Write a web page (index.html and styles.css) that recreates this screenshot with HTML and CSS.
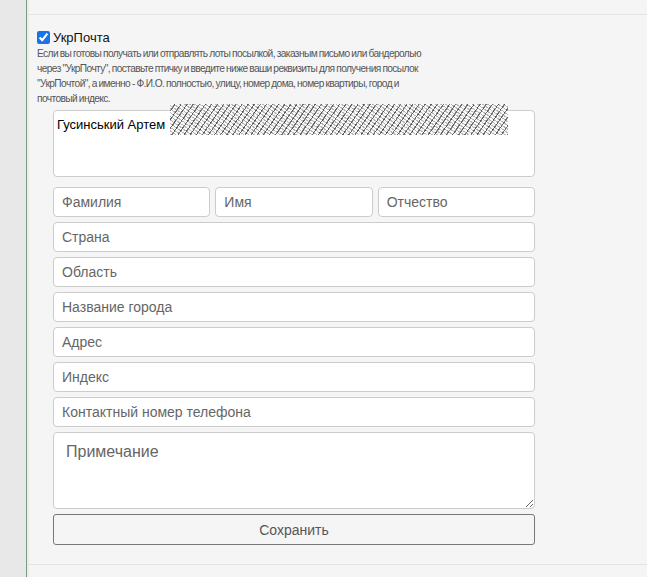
FILE: index.html
```html
<!DOCTYPE html>
<html lang="ru">
<head>
    <meta charset="UTF-8">
    <meta name="viewport" content="width=device-width, initial-scale=1.0">
    <title>УкрПочта</title>
    <link rel="stylesheet" href="styles.css">
</head>
<body>
    <div class="sidebar"></div>
    <div class="page">
        <div class="top-bar"></div>
        <div class="section">
            <label class="check-label">
                <input type="checkbox" checked>
                <span>УкрПочта</span>
            </label>
            <p class="hint">Если вы готовы получать или отправлять лоты посылкой, заказным письмо или бандеролью<br>через "УкрПочту", поставьте птичку и введите ниже ваши реквизиты для получения посылок<br>"УкрПочтой", а именно - Ф.И.О. полностью, улицу, номер дома, номер квартиры, город и<br>почтовый индекс.</p>

            <form class="post-form">
                <div class="address-box">
                    <span class="address-name">Гусинський Артем</span>
                    <span class="redacted"></span>
                </div>
                <div class="name-row">
                    <input class="field" type="text" placeholder="Фамилия">
                    <input class="field" type="text" placeholder="Имя">
                    <input class="field" type="text" placeholder="Отчество">
                </div>
                <input class="field" type="text" placeholder="Страна">
                <input class="field" type="text" placeholder="Область">
                <input class="field" type="text" placeholder="Название города">
                <input class="field" type="text" placeholder="Адрес">
                <input class="field" type="text" placeholder="Индекс">
                <input class="field" type="text" placeholder="Контактный номер телефона">
                <textarea class="note" placeholder="Примечание"></textarea>
                <button class="button save" type="button">Сохранить</button>
            </form>
        </div>
        <div class="bottom-bar"></div>
    </div>
</body>
</html>
```

FILE: styles.css
```css
body {
    font-family: "Liberation Sans", Arial, sans-serif;
    display: flex;
    margin: 0;
    height: 577px;
    overflow: hidden;
    background-color: #f5f5f5;
}

.sidebar {
    width: 26px;
    flex-shrink: 0;
    background-color: #e8e8e8;
    border-right: 1px solid #7c9a82;
}

.page {
    flex: 1;
    border-left: 2px solid #ececec;
    display: flex;
    flex-direction: column;
}

.top-bar {
    height: 14px;
    border-bottom: 1px solid #e4e4e4;
}

.section {
    padding: 14px 0 0 8px;
    height: 549px;
    box-sizing: border-box;
}

.bottom-bar {
    border-top: 1px solid #e4e4e4;
    flex: 1;
}

.check-label {
    display: flex;
    align-items: center;
    gap: 3px;
    font-size: 13px;
    color: #111;
    height: 16px;
}

.check-label input {
    margin: 0;
    width: 13px;
    height: 13px;
    accent-color: #1a73e8;
}

.hint {
    margin: 1px 0 0 0;
    white-space: nowrap;
    font-size: 10.2px;
    letter-spacing: -0.6px;
    word-spacing: -0.5px;
    line-height: 15px;
    color: #555;
}

.post-form {
    margin: 4px 0 0 16px;
    width: 482px;
    display: flex;
    flex-direction: column;
    gap: 5px;
}

.address-box {
    position: relative;
    height: 67px;
    background-color: #fff;
    border: 1px solid #ccc;
    border-radius: 4px;
    box-sizing: border-box;
    padding: 6px 3px;
    font-size: 13px;
    color: #000;
    margin-bottom: 5px;
}

.redacted {
    position: absolute;
    left: 116px;
    top: -7px;
    width: 338px;
    height: 31px;
    background-color: #f4f4f4;
    background-image:
        repeating-linear-gradient(-55deg, rgba(20, 20, 20, 0.6) 0 1px, transparent 1px 5px),
        repeating-linear-gradient(35deg, rgba(60, 60, 60, 0.35) 0 1px, transparent 1px 3px),
        repeating-linear-gradient(90deg, rgba(255, 255, 255, 0.7) 0 2px, transparent 2px 5px),
        repeating-linear-gradient(0deg, rgba(255, 255, 255, 0.5) 0 1px, transparent 1px 3px);
}

.name-row {
    display: flex;
    gap: 5px;
}

.name-row .field {
    flex: 1;
    min-width: 0;
}

.field {
    height: 30px;
    box-sizing: border-box;
    border: 1px solid #ccc;
    border-radius: 4px;
    background-color: #fff;
    padding: 0 8px;
    font-family: "Liberation Sans", Arial, sans-serif;
    font-size: 14px;
    color: #333;
}

.field::placeholder,
.note::placeholder {
    color: #666;
}

.note {
    height: 77px;
    box-sizing: border-box;
    border: 1px solid #ccc;
    border-radius: 4px;
    background-color: #fff;
    padding: 10px 12px;
    font-family: "Liberation Sans", Arial, sans-serif;
    font-size: 16px;
    resize: vertical;
}

.button {
    height: 31px;
    font-family: "Liberation Sans", Arial, sans-serif;
    font-size: 14px;
    border: 1px solid #777;
    border-radius: 3px;
    cursor: pointer;
}

.button.save {
    background-color: #f5f5f5;
    color: #555;
}

.button.save:hover {
    background-color: #ececec;
}
```
